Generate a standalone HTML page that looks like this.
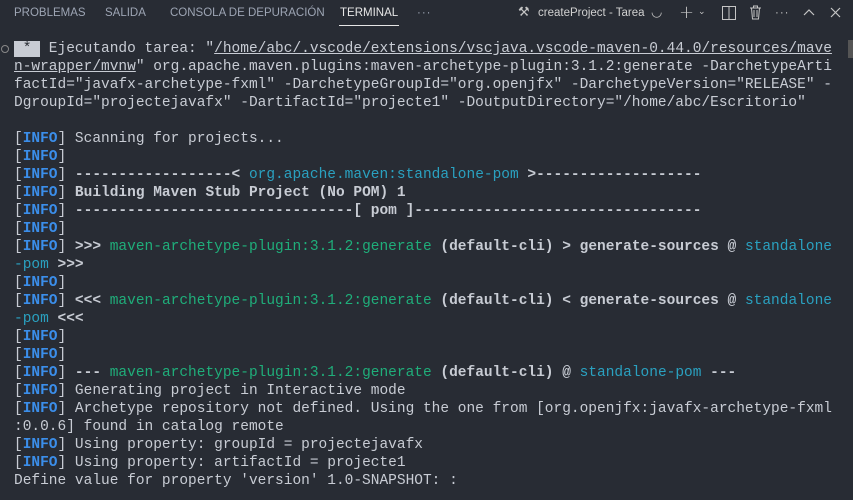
<!DOCTYPE html>
<html><head><meta charset="utf-8"><style>
html,body{margin:0;padding:0;background:#282c34;width:853px;height:500px;overflow:hidden}
.hdr{position:absolute;top:0;left:0;width:853px;height:30px;font-family:"Liberation Sans",sans-serif;font-size:11.5px;color:#9da5b4}
.tab{position:absolute;top:7px}
.act{color:#e6e6e6}
.ul{position:absolute;left:339px;top:25px;width:60px;height:1px;background:#e6e6e6}
.term{position:absolute;left:14px;top:40px;font-family:"Liberation Mono",monospace;font-size:14.5px;line-height:18px;color:#c8ccd4;white-space:pre}
.b{font-weight:bold}
.i{color:#3b8eea;font-weight:bold}
.c{color:#2aa1c0}
.g{color:#1fae7a}
.u{text-decoration:underline}
.hl{background:#c8ccd4;color:#282c34}
.ic{position:absolute;top:5px;color:#c5c5c5;font-family:"DejaVu Sans",sans-serif;font-size:14px}
</style></head><body>
<div class="hdr">
<span class="tab" style="left:14px">PROBLEMAS</span>
<span class="tab" style="left:105px">SALIDA</span>
<span class="tab" style="left:170px">CONSOLA DE DEPURACIÓN</span>
<span class="tab act" style="left:340px">TERMINAL</span>
<span class="tab" style="left:417px;letter-spacing:1px">···</span>
<div class="ul"></div>
<span class="ic" style="left:518px;font-size:13px">⚒</span>
<span class="tab act" style="left:538px;color:#d0d0d0">createProject - Tarea</span>
<span class="ic" style="left:651px;top:5px;font-size:13px">◡</span>
<span class="ic" style="left:679px;top:2px;font-size:18px;font-weight:lighter">+</span>
<span class="ic" style="left:698px;top:7px;font-size:9px">⌄</span>
<svg style="position:absolute;left:722px;top:6px" width="14" height="14"><rect x="0.5" y="0.5" width="13" height="13" fill="none" stroke="#c5c5c5"/><line x1="7" y1="0" x2="7" y2="14" stroke="#c5c5c5"/></svg>
<svg style="position:absolute;left:749px;top:5px" width="13" height="15"><path d="M1 3h11M4.5 3V1h4v2M2.5 3l1 11h6l1-11M5 5v7M8 5v7" fill="none" stroke="#c5c5c5"/></svg>
<span class="tab" style="left:775px;letter-spacing:1px;color:#c5c5c5">···</span>
<svg style="position:absolute;left:803px;top:8px" width="12" height="8"><path d="M1 7l5-5 5 5" fill="none" stroke="#c5c5c5" stroke-width="1.2"/></svg>
<svg style="position:absolute;left:830px;top:7px" width="11" height="11"><path d="M1 1l9 9M10 1l-9 9" fill="none" stroke="#c5c5c5" stroke-width="1.2"/></svg>
</div>
<div style="position:absolute;left:1px;top:45px;width:6px;height:6px;border:1px solid #888;border-radius:50%"></div>
<div style="position:absolute;left:848px;top:40px;width:5px;height:18px;background:#555"></div>
<div class="term"><span class="hl"> * </span> Ejecutando tarea: "<span class="u">/home/abc/.vscode/extensions/vscjava.vscode-maven-0.44.0/resources/mave</span>
<span class="u">n-wrapper/mvnw</span>" org.apache.maven.plugins:maven-archetype-plugin:3.1.2:generate -DarchetypeArti
factId="javafx-archetype-fxml" -DarchetypeGroupId="org.openjfx" -DarchetypeVersion="RELEASE" -
DgroupId="projectejavafx" -DartifactId="projecte1" -DoutputDirectory="/home/abc/Escritorio"

[<span class="i">INFO</span>] Scanning for projects...
[<span class="i">INFO</span>]
[<span class="i">INFO</span>] <span class="b">------------------&lt; </span><span class="c">org.apache.maven:standalone-pom</span><span class="b"> &gt;-------------------</span>
[<span class="i">INFO</span>] <span class="b">Building Maven Stub Project (No POM) 1</span>
[<span class="i">INFO</span>] <span class="b">--------------------------------[ pom ]---------------------------------</span>
[<span class="i">INFO</span>]
[<span class="i">INFO</span>] <span class="b">&gt;&gt;&gt; </span><span class="g">maven-archetype-plugin:3.1.2:generate</span><span class="b"> (default-cli) &gt; generate-sources @ </span><span class="c">standalone</span>
<span class="c">-pom</span><span class="b"> &gt;&gt;&gt;</span>
[<span class="i">INFO</span>]
[<span class="i">INFO</span>] <span class="b">&lt;&lt;&lt; </span><span class="g">maven-archetype-plugin:3.1.2:generate</span><span class="b"> (default-cli) &lt; generate-sources @ </span><span class="c">standalone</span>
<span class="c">-pom</span><span class="b"> &lt;&lt;&lt;</span>
[<span class="i">INFO</span>]
[<span class="i">INFO</span>]
[<span class="i">INFO</span>] <span class="b">--- </span><span class="g">maven-archetype-plugin:3.1.2:generate</span><span class="b"> (default-cli) @ </span><span class="c">standalone-pom</span><span class="b"> ---</span>
[<span class="i">INFO</span>] Generating project in Interactive mode
[<span class="i">INFO</span>] Archetype repository not defined. Using the one from [org.openjfx:javafx-archetype-fxml
:0.0.6] found in catalog remote
[<span class="i">INFO</span>] Using property: groupId = projectejavafx
[<span class="i">INFO</span>] Using property: artifactId = projecte1
Define value for property 'version' 1.0-SNAPSHOT: :</div>
</body></html>
